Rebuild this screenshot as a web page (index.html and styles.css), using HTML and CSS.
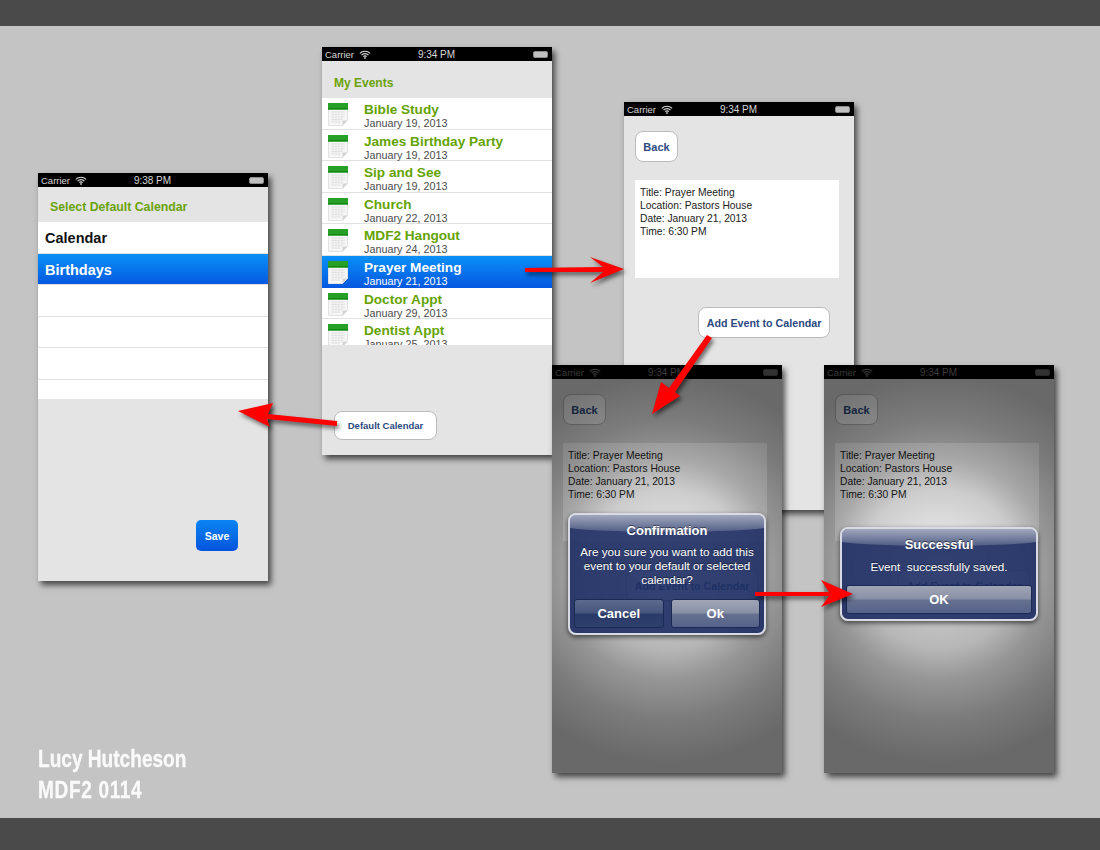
FILE: index.html
```html
<!DOCTYPE html>
<html lang="en">
<head>
    <meta charset="UTF-8">
    <title>MDF2 0114</title>
    <link rel="stylesheet" href="styles.css">
</head>
<body>
    <svg width="0" height="0" class="defs">
        <defs>
            <symbol id="wifi" viewBox="0 0 14 10">
                <path d="M1 3.6a8.6 8.6 0 0 1 12 0M3 5.6a5.7 5.7 0 0 1 8 0M5 7.5a2.8 2.8 0 0 1 4 0" fill="none" stroke="currentColor" stroke-width="1.3"/>
                <circle cx="7" cy="9" r="1" fill="currentColor"/>
            </symbol>
            <symbol id="cal" viewBox="0 0 20 23">
                <path d="M0.5 0.5h19v17l-5 5h-14z" fill="#f6f6f6" stroke="#e2e2e2"/>
                <path d="M0 0h20v6.5H0z" fill="#26a026"/>
                <path d="M0 5h20v1.5H0z" fill="#108a10"/>
                <path d="M3 9h14M3 11.5h14M3 14h14M3 16.5h12M3 19h9M5 8v12M8 8v12M11 8v12M14 8v10" stroke="#dcdcdc" stroke-width=".6" fill="none"/>
                <path d="M19.5 17.5l-5 5v-4l1-1z" fill="#d4d4d4"/>
            </symbol>
        </defs>
    </svg>

    <div class="band"></div>
    <main class="board">

        <section class="phone phone-default">
            <div class="status"><span class="carrier">Carrier <svg class="wifi"><use href="#wifi"/></svg></span><span class="clock">9:38 PM</span><span class="batt"></span></div>
            <div class="screen">
                <h2 class="heading heading-select">Select Default Calendar</h2>
                <div class="picker">
                    <div class="pick">Calendar</div>
                    <div class="pick selected">Birthdays</div>
                    <div class="pick"></div>
                    <div class="pick"></div>
                    <div class="pick"></div>
                    <div class="pick pick-cut"></div>
                </div>
                <div class="save-wrap"><button class="save">Save</button></div>
            </div>
        </section>

        <section class="phone phone-events">
            <div class="status"><span class="carrier">Carrier <svg class="wifi"><use href="#wifi"/></svg></span><span class="clock">9:34 PM</span><span class="batt"></span></div>
            <div class="screen">
                <h2 class="heading">My Events</h2>
                <div class="events">
                    <div class="event"><svg class="cal"><use href="#cal"/></svg><div><b>Bible Study</b><span>January 19, 2013</span></div></div>
                    <div class="event"><svg class="cal"><use href="#cal"/></svg><div><b>James Birthday Party</b><span>January 19, 2013</span></div></div>
                    <div class="event"><svg class="cal"><use href="#cal"/></svg><div><b>Sip and See</b><span>January 19, 2013</span></div></div>
                    <div class="event"><svg class="cal"><use href="#cal"/></svg><div><b>Church</b><span>January 22, 2013</span></div></div>
                    <div class="event"><svg class="cal"><use href="#cal"/></svg><div><b>MDF2 Hangout</b><span>January 24, 2013</span></div></div>
                    <div class="event selected"><svg class="cal"><use href="#cal"/></svg><div><b>Prayer Meeting</b><span>January 21, 2013</span></div></div>
                    <div class="event"><svg class="cal"><use href="#cal"/></svg><div><b>Doctor Appt</b><span>January 29, 2013</span></div></div>
                    <div class="event"><svg class="cal"><use href="#cal"/></svg><div><b>Dentist Appt</b><span>January 25, 2013</span></div></div>
                </div>
                <button class="btn btn-default">Default Calendar</button>
            </div>
        </section>

        <section class="phone phone-detail">
            <div class="status"><span class="carrier">Carrier <svg class="wifi"><use href="#wifi"/></svg></span><span class="clock">9:34 PM</span><span class="batt"></span></div>
            <div class="screen detail">
                <button class="btn btn-back">Back</button>
                <div class="info">Title: Prayer Meeting<br>Location: Pastors House<br>Date: January 21, 2013<br>Time: 6:30 PM</div>
                <button class="btn btn-add">Add Event to Calendar</button>
            </div>
        </section>

        <section class="phone phone-confirm">
            <div class="status"><span class="carrier">Carrier <svg class="wifi"><use href="#wifi"/></svg></span><span class="clock">9:34 PM</span><span class="batt"></span></div>
            <div class="screen detail">
                <button class="btn btn-back">Back</button>
                <div class="info">Title: Prayer Meeting<br>Location: Pastors House<br>Date: January 21, 2013<br>Time: 6:30 PM</div>
                <button class="btn btn-add">Add Event to Calendar</button>
            </div>
            <div class="dim"></div>
            <div class="alert alert-confirm">
                <h3>Confirmation</h3>
                <p>Are you sure you want to add this event to your default or selected calendar?</p>
                <div class="alert-btns"><button>Cancel</button><button class="light">Ok</button></div>
            </div>
        </section>

        <section class="phone phone-done">
            <div class="status"><span class="carrier">Carrier <svg class="wifi"><use href="#wifi"/></svg></span><span class="clock">9:34 PM</span><span class="batt"></span></div>
            <div class="screen detail">
                <button class="btn btn-back">Back</button>
                <div class="info">Title: Prayer Meeting<br>Location: Pastors House<br>Date: January 21, 2013<br>Time: 6:30 PM</div>
                <button class="btn btn-add">Add Event to Calendar</button>
            </div>
            <div class="dim"></div>
            <div class="alert alert-done">
                <h3>Successful</h3>
                <p>Event&nbsp; successfully saved.</p>
                <div class="alert-btns"><button class="light">OK</button></div>
            </div>
        </section>

        <svg class="arrows" viewBox="0 26 1100 792">
            <polygon points="525,268 603,267 590,257 624,269 590,283 603,272 525,272"/>
            <polygon points="238,411 273,403 268,414 337,421 337,426 267,419 270,427"/>
            <polygon points="652,414 661,382 669,388 707,335 712,338 675,392 680,396"/>
            <polygon points="755,592 829,592 821,580 853,594 821,607 829,596 755,596"/>
        </svg>

        <div class="credit">Lucy Hutcheson<br><span>MDF2 0114</span></div>
    </main>
    <div class="band"></div>
</body>
</html>
```

FILE: styles.css
```css
* { box-sizing: border-box; }
html, body { margin: 0; padding: 0; }
body { width: 1100px; height: 850px; overflow: hidden; font-family: "Liberation Sans", Arial, sans-serif; background: #c4c4c4; display: flex; flex-direction: column; }
.defs { position: absolute; }
.band { height: 26px; background: #4a4a4a; }
.band:last-child { height: 32px; }
.board { position: relative; flex: 1; }

/* phones sit on a free canvas, y is minus the 26px band */
.phone { position: absolute; width: 230px; height: 408px; display: flex; flex-direction: column; box-shadow: 3px 4px 6px rgba(0,0,0,.65); }
.phone-default { left: 38px; top: 147px; }
.phone-events { left: 322px; top: 21px; }
.phone-detail { left: 624px; top: 76px; }
.phone-confirm { left: 552px; top: 339px; }
.phone-done { left: 824px; top: 339px; }

.status { position: relative; height: 14px; flex: none; background: #000; color: #d8d8d8; font-size: 9.5px; display: grid; grid-template-columns: 1fr auto 1fr; align-items: center; padding: 0 4px 0 3px; }
.carrier { display: flex; align-items: center; gap: 5px; }
.wifi { width: 12px; height: 9px; }
.clock { font-size: 10px; }
.batt { justify-self: end; width: 15px; height: 7px; border: 1px solid #8c8c8c; border-radius: 2px; background: #c0c0c0; }
.phone-confirm .batt, .phone-done .batt { border-color: #555; background: #6c6c6c; }

.screen { flex: 1; background: #e4e4e4; position: relative; display: flex; flex-direction: column; min-height: 0; }
.heading { margin: 0; height: 37px; flex: none; padding: 14px 0 0 12px; color: #6aa308; font-size: 12px; line-height: 16px; font-weight: bold; }
.heading-select { height: 35px; padding-top: 12px; font-size: 12.3px; }

.events { height: 247px; flex: none; overflow: hidden; background: #fff; }
.event { height: 31.6px; display: flex; padding: 5px 0 0 6px; gap: 16px; border-bottom: 1px solid #e2e2e2; }
.cal { width: 20px; height: 23px; flex: none; }
.event b { display: block; color: #64a300; font-size: 13.6px; line-height: 14px; }
.event span { display: block; color: #4c4c4c; font-size: 10.8px; line-height: 12px; }
.selected { background: linear-gradient(#0a90f8, #0559e0); border-bottom-color: #0559e0; }
.event.selected b, .event.selected span { color: #fff; }

.picker { height: 177px; flex: none; overflow: hidden; background: #fff; }
.pick { height: 31.6px; padding: 1px 7px 0; font-size: 14.5px; font-weight: bold; line-height: 31px; color: #111; border-bottom: 1px solid #e0e0e0; }
.pick.selected { color: #fff; }
.pick-cut { border-bottom: 0; }
.save-wrap { flex: 1; display: flex; justify-content: flex-end; padding: 121px 30px 0 0; }
.save { width: 42px; height: 31px; border: 0; border-radius: 5px; background: linear-gradient(#0a84f4, #0455dc); color: #fff; font: bold 10.5px "Liberation Sans", Arial, sans-serif; padding: 0; }

.btn { display: block; background: #fff; border: 1px solid #bcbcbc; border-radius: 8px; color: #2c4a80; font: bold 10.7px "Liberation Sans", Arial, sans-serif; padding: 0; }
.btn-default { width: 103px; height: 29px; margin: 66px 0 0 12px; font-size: 9.5px; }
.detail { padding: 15px 15px 0 11px; }
.btn-back { width: 43px; height: 31px; font-size: 11px; }
.info { height: 98px; margin-top: 18px; padding: 6px 5px; background: #fff; color: #222; font-size: 10.3px; line-height: 13px; }
.btn-add { width: 132px; height: 31px; margin: 29px 0 0 63px; }

.dim { position: absolute; inset: 0; background: radial-gradient(circle at 50% 50%, rgba(0,0,0,.08) 0, rgba(0,0,0,.12) 40px, rgba(0,0,0,.2) 80px, rgba(0,0,0,.34) 110px, rgba(0,0,0,.46) 150px, rgba(0,0,0,.54) 195px); }
.phone-confirm .status, .phone-done .status { color: #7c7c7c; }

.alert { position: absolute; left: 16px; width: 198px; border: 2px solid #d8dbe4; border-radius: 8px; background: rgba(30,47,100,.9); color: #fff; text-align: center; box-shadow: 0 2px 5px rgba(0,0,0,.6); padding: 0 4px 0; overflow: hidden; }
.alert::before { content: ""; position: absolute; top: 0; left: -10px; right: -10px; height: 17px; border-radius: 0 0 50% 50% / 0 0 7px 7px; background: linear-gradient(rgba(255,255,255,.55), rgba(255,255,255,.16)); }
.alert h3 { position: relative; margin: 0; font-size: 13px; line-height: 16px; text-shadow: 0 -1px 0 rgba(0,0,0,.5); }
.alert p { position: relative; margin: 0; font-size: 11.7px; line-height: 14px; text-shadow: 0 -1px 0 rgba(0,0,0,.5); }
.alert-confirm { top: 148px; height: 122px; padding-top: 8px; }
.alert-confirm p { margin-top: 6px; padding: 0 3px; }
.alert-done { top: 162px; height: 94px; padding-top: 8px; }
.alert-done p { margin-top: 7px; }
.alert-btns { display: flex; gap: 7px; position: absolute; left: 4px; right: 4px; bottom: 5px; }
.alert-btns button { flex: 1; height: 29px; border: 1px solid #1b2a55; border-radius: 3px; color: #fff; font: bold 13px "Liberation Sans", Arial, sans-serif; padding: 0; background: linear-gradient(#5c6a8e 0, #46557c 48%, #2a3a68 52%, #2f3f6e 100%); }
.alert-btns button.light { background: linear-gradient(#a0a6b6 0, #8890a6 48%, #66718f 52%, #55628a 100%); }

.arrows { position: absolute; left: 0; top: 0; width: 1100px; height: 792px; fill: #f00; filter: drop-shadow(2px 3px 2px rgba(0,0,0,.55)); pointer-events: none; }

.credit { position: absolute; left: 38px; top: 717px; color: #fafafa; font: bold 24px/31px "Liberation Sans", sans-serif; white-space: nowrap; -webkit-text-stroke: .3px #fafafa; transform: scaleX(.795); transform-origin: left top; }
.credit span { letter-spacing: .8px; }
```
